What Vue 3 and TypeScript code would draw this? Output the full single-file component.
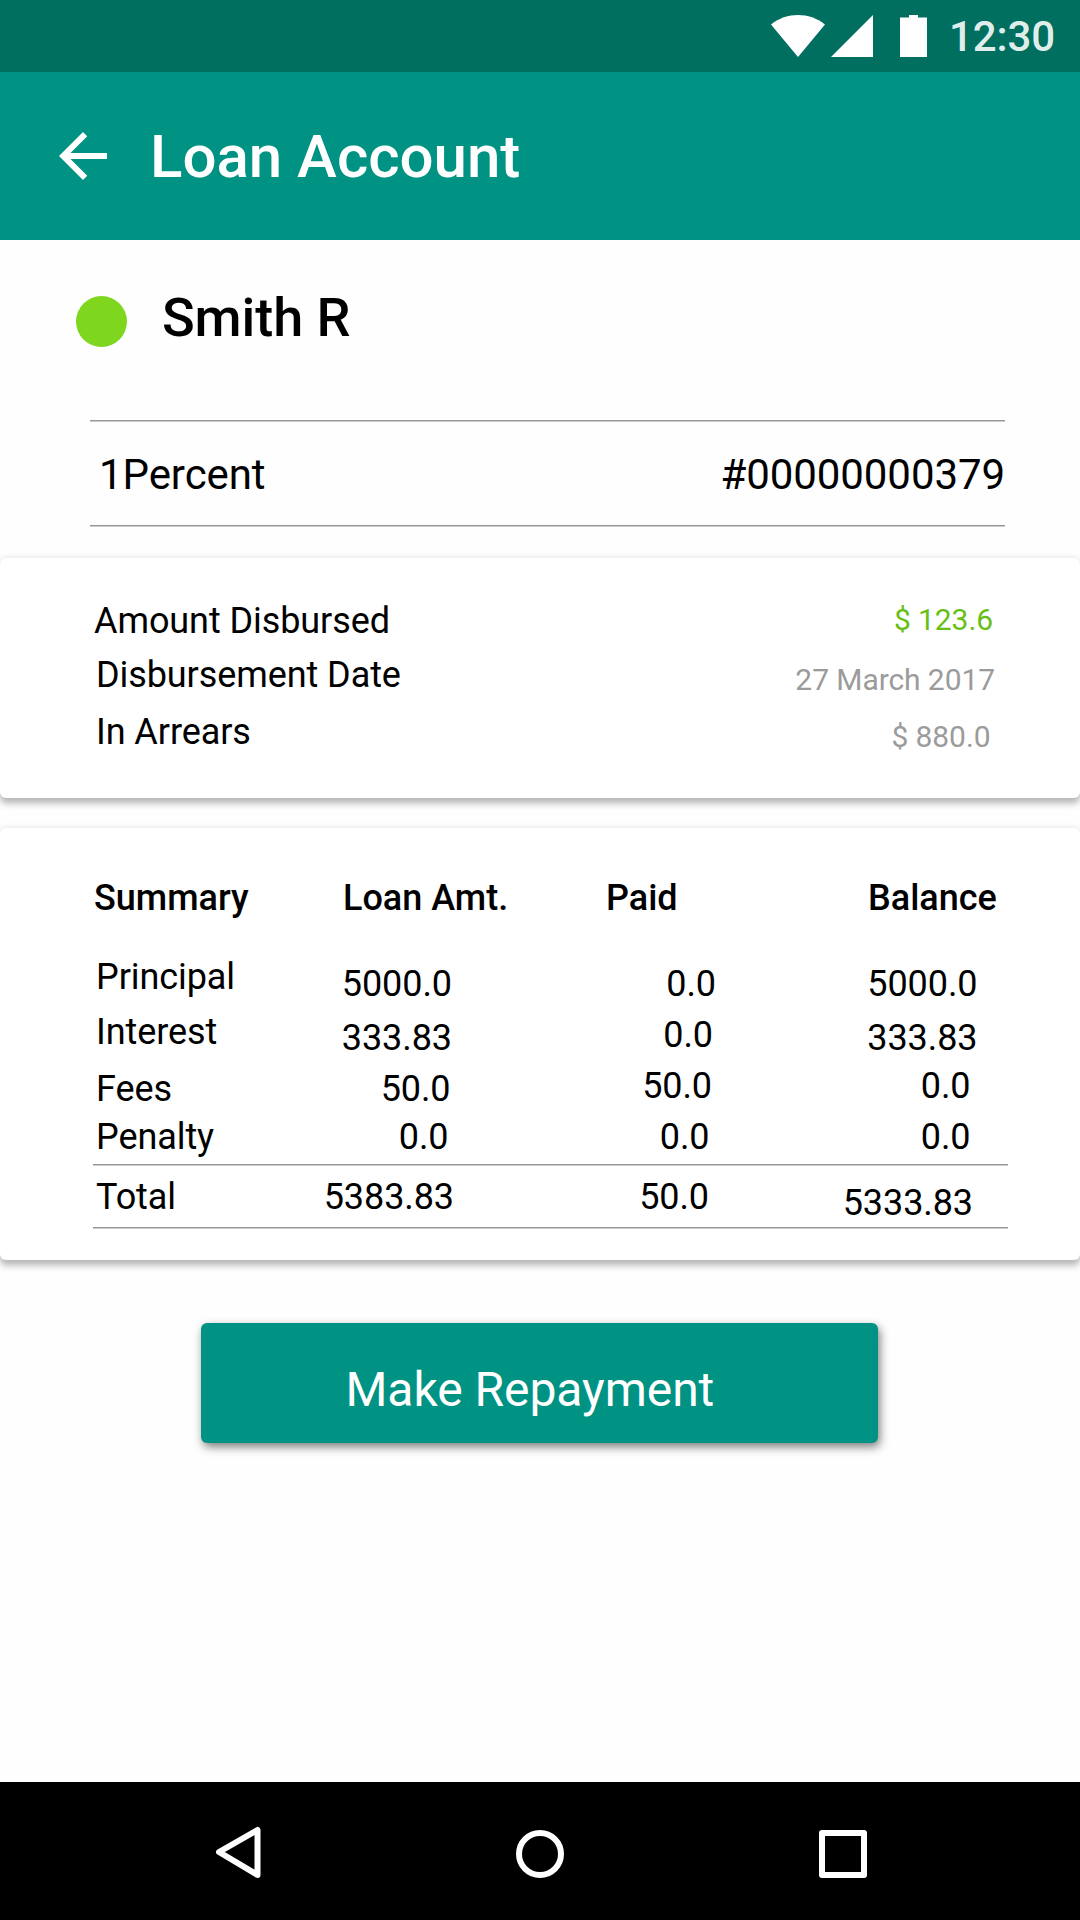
<script setup lang="ts">
interface SummaryColumn {
  title: string
  name: string
  values: string[]
  total: string
}

const columns: SummaryColumn[] = [
  { title: 'Summary', name: 'label', values: ['Principal', 'Interest', 'Fees', 'Penalty'], total: 'Total' },
  { title: 'Loan Amt.', name: 'loan', values: ['5000.0', '333.83', '50.0', '0.0'], total: '5383.83' },
  { title: 'Paid', name: 'paid', values: ['0.0', '0.0', '50.0', '0.0'], total: '50.0' },
  { title: 'Balance', name: 'balance', values: ['5000.0', '333.83', '0.0', '0.0'], total: '5333.83' },
]
</script>

<template>
  <div class="screen">
    <div class="status">
      <svg class="status-icons" width="156" height="42" viewBox="0 0 156 42" fill="#fff">
        <path d="M0 9.6C8 3 17.500 0 27 0s19 3 27 9.600L27 42z" />
        <path d="M102 0v42H60z" />
        <path d="M129 2.500h9V0h9v2.500h9V42h-27z" />
      </svg>
      <span class="clock">12:30</span>
    </div>

    <header class="app-bar">
      <svg class="back" width="72" height="72" viewBox="0 0 24 24" fill="#fff">
        <path d="M20 11H7.830l5.590-5.590L12 4l-8 8 8 8 1.410-1.410L7.830 13H20v-2z" />
      </svg>
      <h1>Loan Account</h1>
    </header>

    <main>
      <div class="client">
        <span class="dot"></span>
        <h2>Smith R</h2>
      </div>

      <div class="product rule">
        <span>1Percent</span>
        <span>#00000000379</span>
      </div>

      <section class="card details">
        <div class="names">
          <span>Amount Disbursed</span>
          <span>Disbursement Date</span>
          <span>In Arrears</span>
        </div>
        <div class="amounts">
          <span class="green">$ 123.6</span>
          <span>27 March 2017</span>
          <span>$ 880.0</span>
        </div>
      </section>

      <section class="card summary">
        <div class="columns">
          <div v-for="c in columns" :key="c.name" :class="['column', c.name]">
            <h3>{{ c.title }}</h3>
            <span v-for="(v, i) in c.values" :key="i">{{ v }}</span>
          </div>
        </div>
        <div class="totals rule">
          <span v-for="c in columns" :key="c.name" :class="c.name">{{ c.total }}</span>
        </div>
      </section>

      <button class="repay" type="button">Make Repayment</button>
    </main>

    <nav class="nav">
      <svg width="48" height="54" viewBox="0 0 48 54" fill="none" stroke="#fff" stroke-width="6" stroke-linejoin="round">
        <path d="M5 26L43.500 4v45z" />
      </svg>
      <svg width="48" height="48" viewBox="0 0 48 48" fill="none" stroke="#fff" stroke-width="6">
        <circle cx="24" cy="24" r="21" />
      </svg>
      <svg width="48" height="48" viewBox="0 0 48 48" fill="none" stroke="#fff" stroke-width="6" stroke-linejoin="round">
        <rect x="3" y="3" width="42" height="42" />
      </svg>
    </nav>
  </div>
</template>

<style>
body {
  background: #fff;
}
</style>

<style scoped>
.screen {
  width: 1080px;
  height: 1920px;
  display: flex;
  flex-direction: column;
  overflow: hidden;
  background: #fefefe;
  color: #000;
  font-family: Roboto, "Noto Sans", sans-serif;
  font-size: 36px;
  line-height: 42px;
  letter-spacing: -0.08px;
  white-space: nowrap;
}
h1, h2, h3 {
  margin: 0;
  font-weight: 500;
}
svg {
  display: block;
  flex: none;
}
.status {
  height: 72px;
  flex: none;
  display: flex;
  align-items: flex-start;
  background: #006f60;
}
.status-icons {
  margin: 15px 0 0 771px;
}
.clock {
  margin: 12px 0 0 22px;
  font-size: 42px;
  line-height: 49px;
  font-weight: 500;
  color: rgba(255, 255, 255, 0.9);
}
.app-bar {
  height: 168px;
  flex: none;
  display: flex;
  align-items: flex-start;
  background: #009384;
}
.back {
  margin: 48px 0 0 47px;
}
h1 {
  margin: 49px 0 0 31px;
  font-size: 60px;
  line-height: 71px;
  letter-spacing: 0;
}
.app-bar h1 {
  color: #fff;
}
main {
  flex: 1;
  display: flex;
  flex-direction: column;
}
.client {
  height: 180px;
  display: flex;
  align-items: flex-start;
}
.dot {
  width: 51px;
  height: 51px;
  margin: 55.500px 0 0 76px;
  border-radius: 50%;
  background: #7ed71e;
}
h2 {
  margin: 46px 0 0 35px;
  font-size: 54px;
  line-height: 63px;
}
.rule {
  width: 915px;
  box-sizing: border-box;
  background:
    linear-gradient(#979797, #979797) 0 0 / 100% 1px no-repeat,
    linear-gradient(#cbcbcb, #cbcbcb) 0 1px / 100% 1px no-repeat,
    linear-gradient(#979797, #979797) 0 calc(100% - 1px) / 100% 1px no-repeat,
    linear-gradient(#cbcbcb, #cbcbcb) 0 100% / 100% 1px no-repeat;
}
.product {
  height: 107px;
  margin-left: 90px;
  padding: 30px 0 0 9px;
  display: flex;
  justify-content: space-between;
  font-size: 42px;
  line-height: 49px;
}
.card {
  border-radius: 6px;
  background: #fff;
  box-shadow: 0 0 6px rgba(0, 0, 0, 0.12), 0 6px 6px rgba(0, 0, 0, 0.24);
}
.details {
  height: 240px;
  box-sizing: border-box;
  margin-top: 31px;
  padding: 42px 85px 0 94px;
  display: flex;
  justify-content: space-between;
}
.names,
.amounts {
  display: flex;
  flex-direction: column;
}
.names span:nth-child(2) {
  margin: 12px 0 0 2px;
}
.names span:nth-child(3) {
  margin: 15px 0 0 2px;
}
.amounts {
  align-items: flex-end;
  font-size: 30px;
  line-height: 35px;
  color: #9b9b9b;
}
.amounts span:nth-child(1) {
  margin: 2px 2px 0 0;
}
.amounts span:nth-child(2) {
  margin-top: 25px;
}
.amounts span:nth-child(3) {
  margin: 22px 4.500px 0 0;
}
.amounts .green {
  color: #67bf16;
}
.summary {
  height: 432px;
  box-sizing: border-box;
  margin-top: 30px;
  padding: 49px 72px 0 93px;
}
.columns {
  height: 287px;
  display: flex;
}
.column {
  display: flex;
  flex-direction: column;
  align-items: flex-end;
  box-sizing: border-box;
}
h3 {
  align-self: flex-start;
  font-size: 36px;
  line-height: 42px;
  letter-spacing: 0;
}
.label {
  width: 250px;
}
.loan {
  width: 263px;
}
.paid {
  width: 262px;
}
.balance {
  width: 140px;
}
.column.label {
  align-items: flex-start;
  padding-left: 1px;
}
.label span {
  margin-left: 2px;
}
.label span:nth-child(2) { margin-top: 37px; }
.label span:nth-child(3) { margin-top: 13px; }
.label span:nth-child(4) { margin-top: 15px; }
.label span:nth-child(5) { margin-top: 6px; }

.loan span:nth-child(2) { margin: 44px 154px 0 0; }
.loan span:nth-child(3) { margin: 12px 154px 0 0; }
.loan span:nth-child(4) { margin: 9px 155.500px 0 0; }
.loan span:nth-child(5) { margin: 6px 157.500px 0 0; }

.paid span:nth-child(2) { margin: 44px 152px 0 0; }
.paid span:nth-child(3) { margin: 9px 155px 0 0; }
.paid span:nth-child(4) { margin: 9px 156px 0 0; }
.paid span:nth-child(5) { margin: 9px 158.500px 0 0; }

.balance span:nth-child(2) { margin: 44px 30.500px 0 0; }
.balance span:nth-child(3) { margin: 12px 30.500px 0 0; }
.balance span:nth-child(4) { margin: 6px 37.500px 0 0; }
.balance span:nth-child(5) { margin: 9px 37.500px 0 0; }

.totals {
  height: 65px;
  display: flex;
}
.totals span {
  box-sizing: border-box;
  padding-top: 12px;
  text-align: right;
}
.totals .label {
  width: 200px;
  padding-left: 3px;
  text-align: left;
}
.totals .loan {
  width: 313px;
  padding-right: 152px;
}
.totals .paid {
  width: 222px;
  padding-right: 119px;
}
.totals .balance {
  width: 180px;
  padding: 18px 35px 0 0;
}
.repay {
  width: 677px;
  height: 120px;
  margin: 63px 0 0 201px;
  padding: 13px 0 0 144.500px;
  border: 0;
  border-radius: 6px;
  background: #009384;
  box-shadow: 2px 4px 10px rgba(0, 0, 0, 0.5);
  color: #fff;
  font: 400 48px/57px Roboto, sans-serif;
  letter-spacing: -0.05px;
  text-align: left;
}
.nav {
  height: 138px;
  flex: none;
  display: flex;
  align-items: flex-start;
  background: #000;
}
.nav svg:nth-child(1) { margin: 44px 0 0 214px; }
.nav svg:nth-child(2) { margin: 48px 0 0 254px; }
.nav svg:nth-child(3) { margin: 48px 0 0 255px; }
</style>
